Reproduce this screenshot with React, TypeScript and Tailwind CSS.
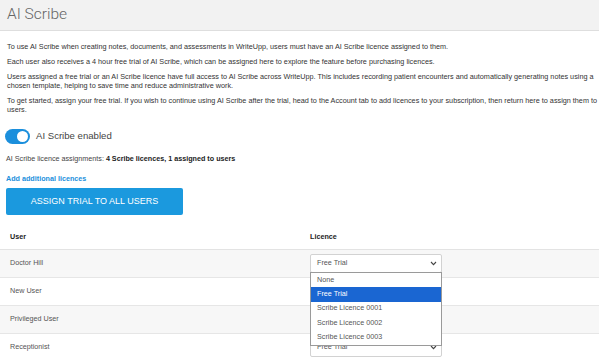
import React from "react";

const rows = ["Doctor Hill", "New User", "Privileged User", "Receptionist"];

function Chevron() {
  return (
    <svg width="7" height="5" viewBox="0 0 7 5" className="text-[#444]">
      <path d="M1 1 L3.5 3.6 L6 1" fill="none" stroke="currentColor" strokeWidth="1.1" />
    </svg>
  );
}

function Select({ value }: { value: string }) {
  return (
    <div className="w-[132px] h-[19px] bg-white border border-[#d2d2d2] rounded-[2px] flex items-center justify-between pl-[6px] pr-[4px] text-[7.2px] text-[#555]">
      <span>{value}</span>
      <Chevron />
    </div>
  );
}

export default function App() {
  return (
    <div className="w-[599px] h-[358px] overflow-hidden bg-white text-[#333]" style={{ fontFamily: '"Liberation Sans", Arial, sans-serif' }}>
      <div className="h-[31px] bg-[#f2f2f2] border-b border-[#dedede] px-[7px] flex items-center">
        <h1 className="text-[15.5px] font-light text-[#666] leading-none" style={{ fontFamily: 'Roboto, "Liberation Sans", sans-serif' }}>AI Scribe</h1>
      </div>
      <div className="pl-[7px] pr-0 pt-[11px] text-[7.25px] leading-[9px] text-[#333]">
        <p>To use AI Scribe when creating notes, documents, and assessments in WriteUpp, users must have an AI Scribe licence assigned to them.</p>
        <p className="mt-[6px]">Each user also receives a 4 hour free trial of AI Scribe, which can be assigned here to explore the feature before purchasing licences.</p>
        <p className="mt-[6px] pr-[3px]">Users assigned a free trial or an AI Scribe licence have full access to AI Scribe across WriteUpp. This includes recording patient encounters and automatically generating notes using a chosen template, helping to save time and reduce administrative work.</p>
        <p className="mt-[6px]">To get started, assign your free trial. If you wish to continue using AI Scribe after the trial, head to the Account tab to add licences to your subscription, then return here to assign them to users.</p>
      </div>
      <div className="px-[5px] mt-[15px] flex items-center gap-[6px]">
        <div className="w-[25px] h-[15px] rounded-full bg-[#1b8fdc] flex items-center justify-end pr-[2px]">
          <div className="w-[11px] h-[11px] rounded-full bg-white" />
        </div>
        <span className="text-[9.6px] text-[#444]">AI Scribe enabled</span>
      </div>
      <div className="px-[6px] mt-[10px] text-[7.2px] text-[#444]">
        AI Scribe licence assignments: <span className="font-bold text-[#222]">4 Scribe licences, 1 assigned to users</span>
      </div>
      <div className="px-[6px] mt-[9px] text-[7.2px] font-bold text-[#1b8fdc]">Add additional licences</div>
      <div className="px-[6px] mt-[2px]">
        <button className="w-[177px] h-[27px] rounded-[2px] bg-[#1b99de] text-white text-[9px]">ASSIGN TRIAL TO ALL USERS</button>
      </div>
      <div className="mt-[17px] relative">
        <div className="flex h-[12px] items-center border-b border-[#e3e3e3] pb-[5px] box-content text-[7.2px] font-bold text-[#222]">
          <div className="w-[310px] pl-[10px]">User</div>
          <div>Licence</div>
        </div>
        {rows.map((r, i) => (
          <div key={r} className={`flex h-[28px] items-center border-b border-[#e6e6e6] text-[7.2px] text-[#555] ${i % 2 === 0 ? "bg-[#f7f7f7]" : "bg-white"}`}>
            <div className="w-[310px] pl-[10px]">{r}</div>
            <div>{i === 0 || i === 3 ? <Select value="Free Trial" /> : null}</div>
          </div>
        ))}
        <div className="absolute left-[310px] top-[40px] w-[132px] bg-white border border-[#9a9a9a] text-[7.2px] text-[#555]">
          {["None", "Free Trial", "Scribe Licence 0001", "Scribe Licence 0002", "Scribe Licence 0003"].map((o) => (
            <div key={o} className={`h-[14.4px] flex items-center pl-[6px] ${o === "Free Trial" ? "bg-[#1a66d2] text-white" : ""}`}>{o}</div>
          ))}
        </div>
      </div>
    </div>
  );
}
